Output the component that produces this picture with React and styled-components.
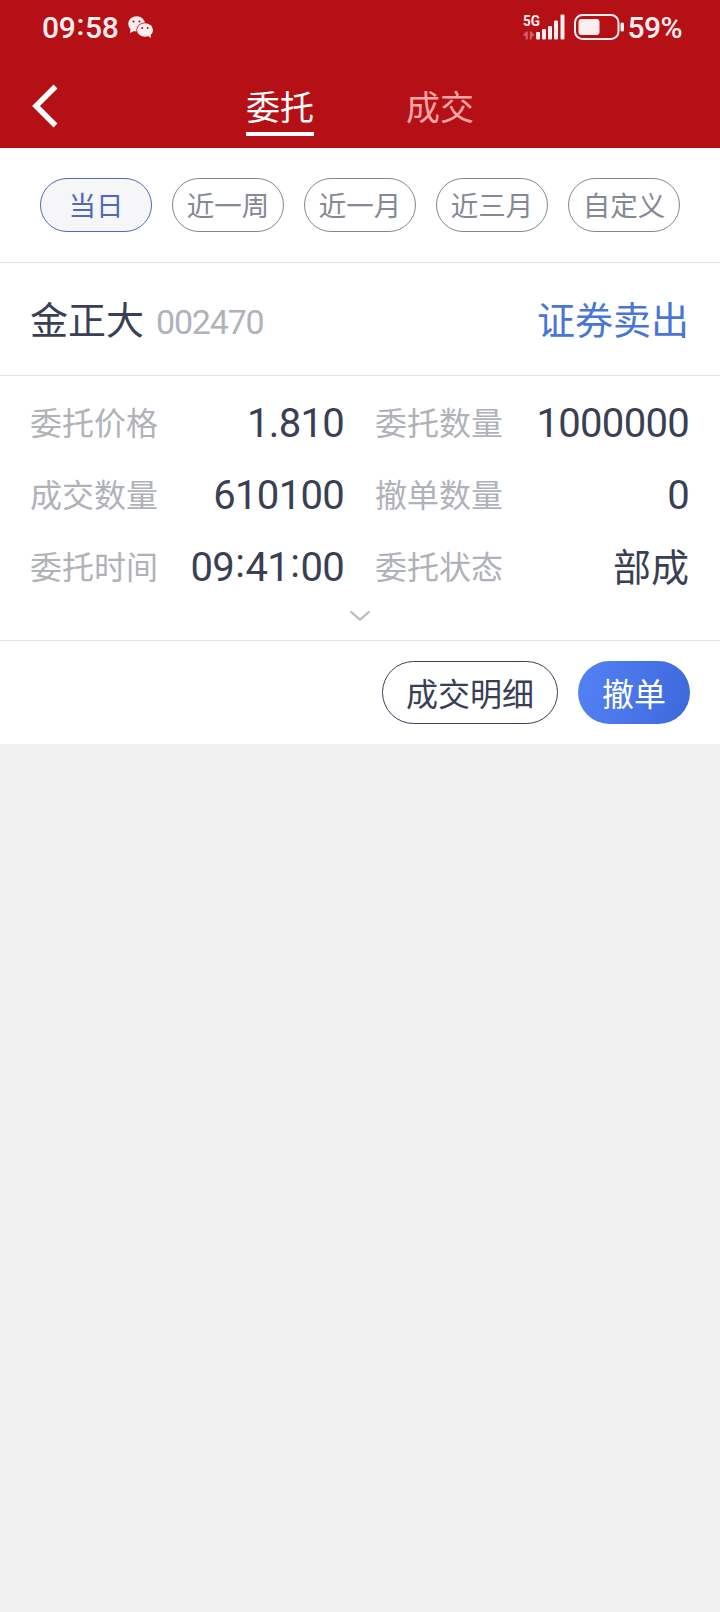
import React from "react";
import styled, { createGlobalStyle } from "styled-components";

const periods = ["当日", "近一周", "近一月", "近三月", "自定义"];

const details = [
  { label: "委托价格", value: "1.810" },
  { label: "委托数量", value: "1000000" },
  { label: "成交数量", value: "610100" },
  { label: "撤单数量", value: "0" },
  { label: "委托时间", value: "09:41:00" },
  { label: "委托状态", value: "部成", text: true },
];

// colons sit at the middle of the digits, not on the baseline
function Time({ value }) {
  return value.split(":").map((part, i) => (
    <React.Fragment key={i}>
      {i > 0 && <Colon>:</Colon>}
      {part}
    </React.Fragment>
  ));
}

function StatusBar() {
  return (
    <Status>
      <Clock>
        <Time value="09:58" />
      </Clock>
      <WechatIcon viewBox="0 0 26 22">
        <path d="M2.500 12.500L2 17l4-2z" />
        <ellipse cx="8.600" cy="7.800" rx="8.400" ry="7.600" />
        <ellipse cx="17" cy="14" rx="8.700" ry="7.400" fill="#b51016" />
        <path d="M19.500 19.500l3.500 2.500-.5-4.500z" />
        <ellipse cx="17" cy="14" rx="8" ry="6.700" />
        <g fill="#b51016">
          <circle cx="5.500" cy="5.500" r="1.100" />
          <circle cx="11.500" cy="5.500" r="1.100" />
          <circle cx="14.200" cy="12" r="1" />
          <circle cx="19.600" cy="12" r="1" />
        </g>
      </WechatIcon>
      <Signal viewBox="-1 -6 44 38">
        <text x="0" y="12" fontSize="15.500" textLength="17" lengthAdjust="spacingAndGlyphs">
          5G
        </text>
        <path opacity="0.35" d="M0 21l3-3.500h1.800v8h-2v-3zM11.500 21l-3-3.500H6.700v8h2v-2z" />
        <rect x="13" y="18" width="4" height="7.500" rx="1" />
        <rect x="19" y="15" width="4" height="10.500" rx="1" />
        <rect x="25" y="12" width="4" height="13.500" rx="1" />
        <rect x="31" y="6.500" width="4" height="19" rx="1" />
        <rect x="37.500" y="0.500" width="4" height="25" rx="1" />
      </Signal>
      <Battery viewBox="0 0 51 26">
        <rect x="1" y="1" width="43.500" height="24" rx="7.500" fill="none" stroke="#ffeef0" strokeWidth="2" />
        <rect x="4.500" y="5" width="21" height="16" rx="3" />
        <rect x="46.500" y="8.500" width="3.500" height="9" rx="1.500" />
      </Battery>
      <Percent>59%</Percent>
    </Status>
  );
}

function App() {
  return (
    <Page>
      <GlobalStyle />
      <Header>
        <StatusBar />
        <Nav>
          <BackIcon viewBox="0 0 26 44">
            <path d="M23.500 2.500L4 22l19.500 19.500" />
          </BackIcon>
          <Tab $active>委托</Tab>
          <Tab>成交</Tab>
        </Nav>
      </Header>
      <Filters>
        {periods.map((name, i) => (
          <Pill key={name} $active={i === 0}>
            {name}
          </Pill>
        ))}
      </Filters>
      <Stock>
        <Name>金正大</Name>
        <Code>002470</Code>
        <Side>证券卖出</Side>
      </Stock>
      <Details>
        <Grid>
          {details.map((d) => (
            <Field key={d.label}>
              <Label>{d.label}</Label>
              {d.text ? (
                <StateValue>{d.value}</StateValue>
              ) : (
                <Value>
                  <Time value={d.value} />
                </Value>
              )}
            </Field>
          ))}
        </Grid>
        <ExpandIcon viewBox="0 0 22 12">
          <path d="M1.500 1.500L11 9.500l9.500-8" />
        </ExpandIcon>
      </Details>
      <Actions>
        <DetailButton>成交明细</DetailButton>
        <CancelButton>撤单</CancelButton>
      </Actions>
    </Page>
  );
}

export default App;

const GlobalStyle = createGlobalStyle`
  * {
    box-sizing: border-box;
  }
  body {
    margin: 0;
    background: #f1f1f1;
    font-family: "Noto Sans CJK SC", sans-serif;
  }
`;

const Page = styled.div`
  width: 720px;
  min-height: 1612px;
  background: #f1f1f1;
`;

const Header = styled.div`
  height: 148px;
  background: #b51016;
  color: white;
`;

const Status = styled.div`
  display: flex;
  height: 54px;
  padding: 0 38px 0 42px;
  align-items: center;
  font-family: Roboto, sans-serif;
  font-weight: 500;
  font-size: 30px;
  color: #ffeef0;
  fill: #ffeef0;
`;

const Clock = styled.div`
  width: 77px;
  letter-spacing: -0.3px;
  white-space: nowrap;
`;

const Colon = styled.span`
  padding: 0 0.03em;
  line-height: 0;
  vertical-align: 0.08em;
`;

const WechatIcon = styled.svg`
  width: 26px;
  height: 22px;
  margin-left: 9px;
`;

const Signal = styled.svg`
  width: 44px;
  height: 38px;
  margin-left: auto;
  font-weight: 700;
`;

const Battery = styled.svg`
  width: 51px;
  height: 26px;
  margin-left: 8px;
`;

const Percent = styled.div`
  margin-left: 3px;
  letter-spacing: -0.6px;
`;

const Nav = styled.div`
  display: flex;
  height: 94px;
  padding-left: 32px;
  align-items: flex-start;
`;

const BackIcon = styled.svg`
  width: 26px;
  height: 44px;
  margin: 30px 188px 0 0;
  fill: none;
  stroke: white;
  stroke-width: 5.5;
`;

const Tab = styled.div`
  width: 68px;
  height: 54px;
  margin: 28px 92px 0 0;
  font-size: 34px;
  line-height: 47px;
  text-align: center;
  color: ${(props) => (props.$active ? "white" : "#ffa6a8")};
  border-bottom: 4px solid ${(props) => (props.$active ? "white" : "transparent")};
`;

const Filters = styled.div`
  display: flex;
  height: 115px;
  padding: 30px 40px 0;
  gap: 20px;
  background: white;
  border-bottom: 1px solid #e1e2e4;
`;

const Pill = styled.div`
  width: 112px;
  height: 54px;
  border: 1px solid ${(props) => (props.$active ? "#4f69bd" : "#85868c")};
  border-radius: 27px;
  background: ${(props) => (props.$active ? "#f6f6f8" : "white")};
  color: ${(props) => (props.$active ? "#4f69bd" : "#858994")};
  font-size: 27.5px;
  line-height: 51px;
  text-align: center;
`;

const Stock = styled.div`
  display: flex;
  height: 113px;
  padding: 0 31px 4px 30px;
  align-items: center;
  background: white;
  border-bottom: 1px solid #e1e2e4;
`;

const Name = styled.div`
  font-size: 38px;
  color: #393f55;
`;

const Code = styled.div`
  margin: 9px 0 0 12px;
  font-family: Roboto, sans-serif;
  font-size: 34px;
  letter-spacing: -1.2px;
  color: #b0b2ba;
`;

const Side = styled.div`
  margin-left: auto;
  font-size: 38px;
  color: #4876d6;
`;

const Details = styled.div`
  height: 265px;
  padding: 9px 31px 0 30px;
  background: white;
  border-bottom: 1px solid #e1e2e4;
`;

const Grid = styled.div`
  display: grid;
  grid-template-columns: 314px 314px;
  grid-auto-rows: 72px;
  column-gap: 31px;
`;

const Field = styled.div`
  display: flex;
  justify-content: space-between;
  align-items: center;
`;

const Label = styled.div`
  font-size: 32px;
  color: #b0b2ba;
`;

const Value = styled.div`
  padding-top: 4px;
  font-family: Roboto, sans-serif;
  font-size: 40px;
  letter-spacing: -0.7px;
  color: #393f55;
`;

const StateValue = styled.div`
  font-size: 38px;
  line-height: 50px;
  color: #393f55;
`;

const ExpandIcon = styled.svg`
  display: block;
  width: 22px;
  height: 12px;
  margin: 9px auto 0;
  fill: none;
  stroke: #b8bac2;
  stroke-width: 2.2;
`;

const Actions = styled.div`
  display: flex;
  height: 103px;
  padding: 20px 30px 0;
  justify-content: flex-end;
  gap: 20px;
  background: white;
`;

const DetailButton = styled.div`
  width: 176px;
  height: 63px;
  border: 1px solid #393f55;
  border-radius: 32px;
  color: #393f55;
  font-size: 32px;
  line-height: 60px;
  text-align: center;
`;

const CancelButton = styled(DetailButton)`
  width: 112px;
  border: none;
  line-height: 62px;
  background: linear-gradient(100deg, #5482f5, #3c68da);
  color: white;
`;
